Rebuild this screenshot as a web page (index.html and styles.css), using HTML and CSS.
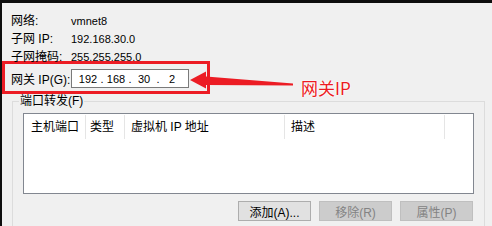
FILE: index.html
```html
<!DOCTYPE html>
<html>
<head>
    <title>vmnet8 NAT 设置</title>
    <meta charset="utf-8">
    <link rel="stylesheet" href="styles.css">
</head>
<body>
    <div class="window">
        <div class="info">
            <div class="row"><span class="key">网络:</span><span class="val">vmnet8</span></div>
            <div class="row"><span class="key">子网 IP:</span><span class="val">192.168.30.0</span></div>
            <div class="row"><span class="key">子网掩码:</span><span class="val">255.255.255.0</span></div>
        </div>

        <div class="gateway">
            <span class="key">网关 IP(G):</span>
            <div class="ip-box">
                <span class="octet">192</span><span class="dot">.</span>
                <span class="octet">168</span><span class="dot">.</span>
                <span class="octet">30</span><span class="dot">.</span>
                <span class="octet">2</span>
            </div>
        </div>

        <fieldset class="group">
            <legend>端口转发(F)</legend>
            <div class="list">
                <div class="list-head">
                    <div class="col col-port">主机端口</div>
                    <div class="col col-type">类型</div>
                    <div class="col col-ip">虚拟机 IP 地址</div>
                    <div class="col col-desc">描述</div>
                </div>
            </div>
            <div class="buttons">
                <button class="btn">添加(A)...</button>
                <button class="btn" disabled>移除(R)</button>
                <button class="btn" disabled>属性(P)</button>
            </div>
        </fieldset>

        <!-- annotation -->
        <svg class="arrow" width="492" height="226" viewBox="0 0 492 226">
            <polygon points="190,80 206,71.5 206,76.5 293,83.5 293,85.5 206,85 206,88.5" fill="#ec1c24"/>
        </svg>
        <div class="callout">网关IP</div>
    </div>
</body>
</html>
```

FILE: styles.css
```css
body {
    margin: 0;
    background: #f0f0f0;
    font-family: "Liberation Sans", "Noto Sans CJK SC", sans-serif;
    font-size: 12px;
    color: #000;
}

.window {
    position: relative;
    height: 226px;
    box-sizing: border-box;
    border-top: 3px solid #0e0e0e;
    border-left: 2px solid #0e0e0e;
    overflow: hidden;
}

.info {
    padding: 9px 0 0 9px;
}

.row {
    display: flex;
    height: 18px;
    line-height: 18px;
}

.key {
    width: 60px;
    flex: none;
}

.val {
    font-size: 11px;
}

/* red frame round the gateway row */
.gateway {
    display: flex;
    align-items: center;
    box-sizing: border-box;
    width: 208px;
    height: 33px;
    margin-top: -5px;
    padding: 2px 0 0 6px;
    border: 3px solid #ec1c24;
}

.ip-box {
    display: flex;
    align-items: center;
    box-sizing: border-box;
    width: 118px;
    height: 19px;
    padding-left: 5px;
    border: 1px solid #7a7a7a;
    background: #fff;
    font-size: 11px;
}

.octet {
    width: 22px;
    text-align: center;
}

.dot {
    width: 6px;
    text-align: center;
}

.group {
    margin: 0 7px 0 10px;
    padding: 0 0 12px 0;
    border: 1px solid #dcdcdc;
}

.group legend {
    margin-left: 6px;
    padding: 0 1px;
    line-height: 14px;
}

.list {
    box-sizing: border-box;
    width: 451px;
    height: 81px;
    margin: 5px 0 0 10px;
    border: 1px solid #828790;
    background: #fff;
}

.list-head {
    display: flex;
    height: 24px;
    line-height: 24px;
    margin-top: 1px;
}

.col {
    box-sizing: border-box;
    padding-left: 6px;
    border-right: 1px solid #e5e5e5;
}

.col-port { width: 62px; padding-left: 7px; }
.col-type { width: 39px; padding-left: 4px; }
.col-ip { width: 160px; }
.col-desc { width: 160px; }

.buttons {
    display: flex;
    justify-content: flex-end;
    gap: 8px;
    margin: 7px 11px 0 10px;
}

.btn {
    width: 73px;
    height: 20px;
    box-sizing: border-box;
    padding: 0;
    border: 1px solid #adadad;
    background: #e1e1e1;
    color: #000;
    font-family: inherit;
    font-size: 12px;
}

.btn:disabled {
    background: #cccccc;
    border-color: #bfbfbf;
    color: #838383;
}

.arrow {
    position: absolute;
    left: -2px;
    top: -3px;
    pointer-events: none;
}

.callout {
    position: absolute;
    left: 299px;
    top: 76px;
    font-family: "Noto Sans CJK SC", sans-serif;
    font-size: 17px;
    line-height: 17px;
    color: #ec1c24;
    text-shadow: 0 0 2px #fff, 0 0 2px #fff, 0 0 1px #fff;
}
```
